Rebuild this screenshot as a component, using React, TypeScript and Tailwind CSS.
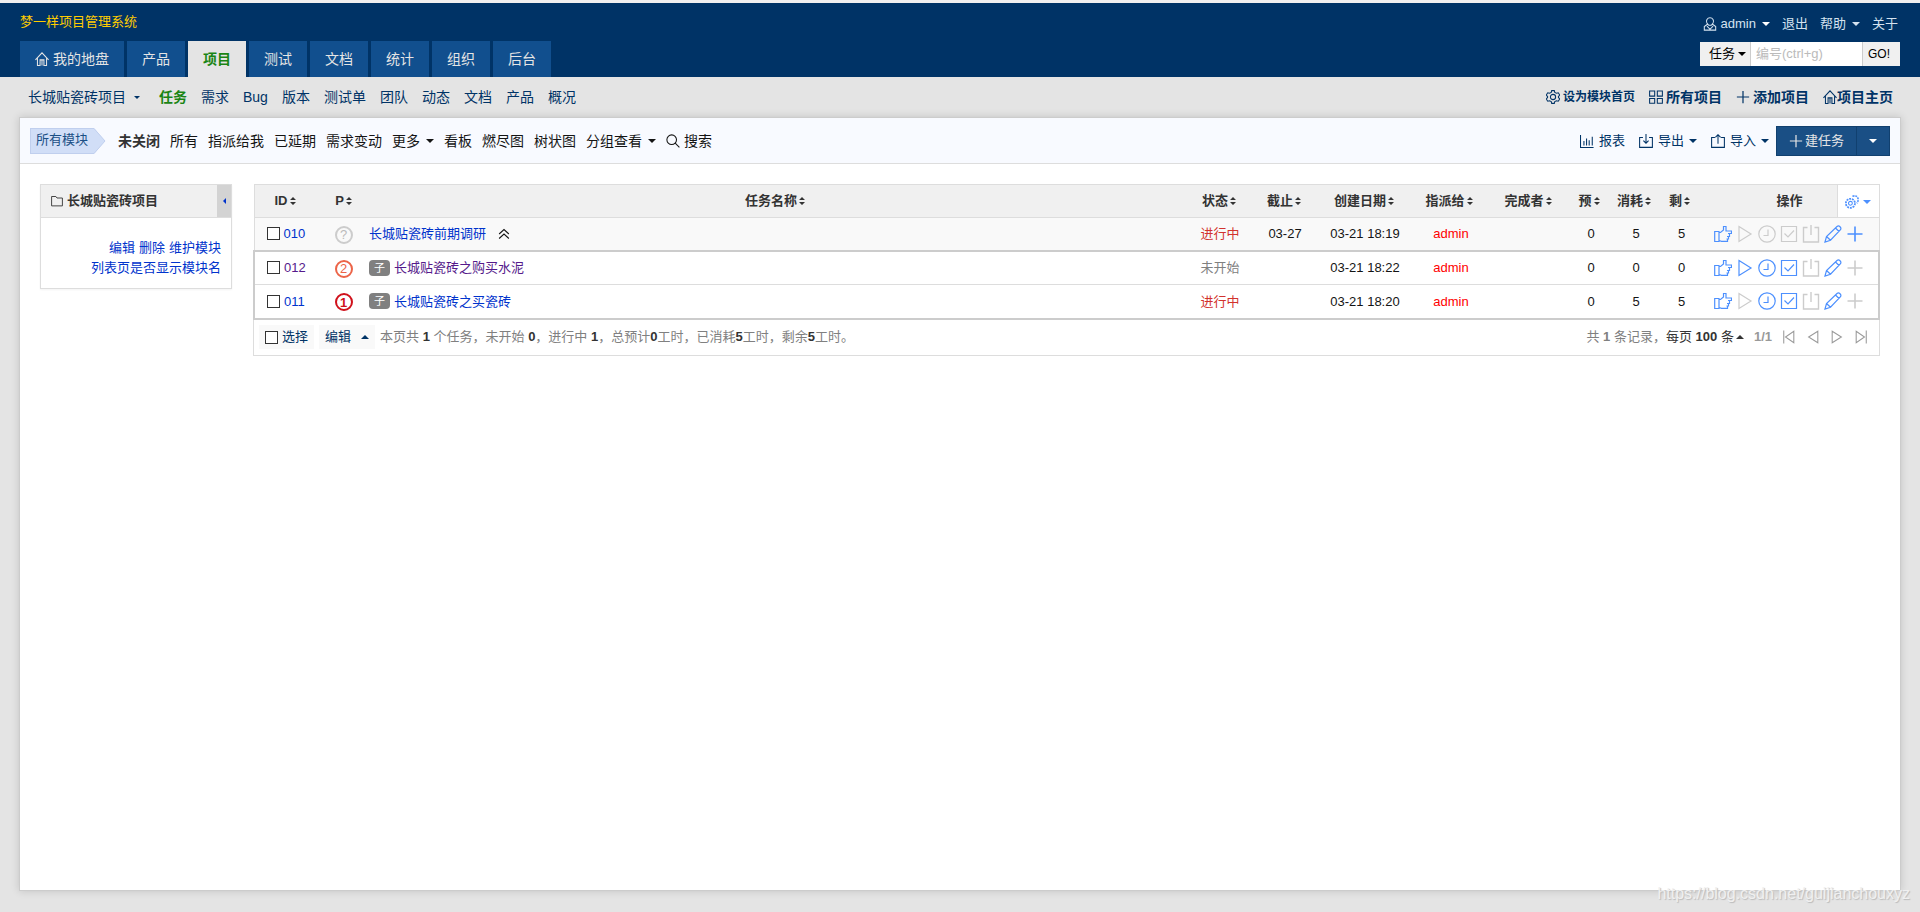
import type { ReactNode } from 'react';
import clsx from 'clsx';

const tabs = ['产品', '项目', '测试', '文档', '统计', '组织', '后台'];
const subMenu = ['任务', '需求', 'Bug', '版本', '测试单', '团队', '动态', '文档', '产品', '概况'];

type Filter = { label: string; active?: boolean; caret?: boolean };

const filters: Filter[] = [
  { label: '未关闭', active: true },
  { label: '所有' },
  { label: '指派给我' },
  { label: '已延期' },
  { label: '需求变动' },
  { label: '更多', caret: true },
  { label: '看板' },
  { label: '燃尽图' },
  { label: '树状图' },
  { label: '分组查看', caret: true },
];

type Task = {
  id: string;
  pri: string;
  name: string;
  status: string;
  deadline: string;
  created: string;
  estimate: number;
  consumed: number;
  left: number;
  visited?: boolean;
  enabled: string[];
};

const parentTask: Task = {
  id: '010', pri: '?', name: '长城贴瓷砖前期调研', status: '进行中', deadline: '03-27', created: '03-21 18:19',
  estimate: 0, consumed: 5, left: 5, enabled: ['指派', '编辑', '分解'],
};

const childTasks: Task[] = [
  {
    id: '012', pri: '2', name: '长城贴瓷砖之购买水泥', status: '未开始', deadline: '', created: '03-21 18:22',
    estimate: 0, consumed: 0, left: 0, visited: true, enabled: ['指派', '开始', '工时', '完成', '编辑'],
  },
  {
    id: '011', pri: '1', name: '长城贴瓷砖之买瓷砖', status: '进行中', deadline: '', created: '03-21 18:20',
    estimate: 0, consumed: 5, left: 5, enabled: ['指派', '工时', '完成', '编辑'],
  },
];

const actions = [
  { name: '指派', icon: <path d="M.7 6.500h4.300v10H.7zM5 7.500h1.500L9.500 5V1.500h2.500v4.500h5.500v2.500H14M15.500 8.500v3H13M14.500 11.500v2.500H12.500M13.500 14v2.300H7.500L5 15.500" /> },
  { name: '开始', icon: <path d="M3 1.500L15 9 3 16.500z" /> },
  { name: '工时', icon: <path d="M9 .8a8.200 8.200 0 1 0 0 16.400A8.200 8.200 0 1 0 9 .8zM10 4.500v6H5.500" /> },
  { name: '完成', icon: <path d="M1.500 1.500h15v15h-15zM4.500 8.500l3.500 3.500 6-6.500" /> },
  { name: '关闭', icon: <path d="M5.500 2.500h-4v14.500h15V2.500h-4M9 0v10" strokeWidth="1.4" /> },
  { name: '编辑', icon: <path d="M1 17l1.500-5.500L13 1.500q1.500-1.200 3 .200t.500 3L6.500 15.200zM11.500 3l3.500 3.500M2.500 11.500l4 3.700" /> },
  { name: '分解', icon: <path d="M9 1.500v15M1.500 9h15" strokeWidth="1.6" /> },
];

const columns = ['状态', '截止', '创建日期', '指派给', '完成者', '预', '消耗', '剩'];

const Icon = ({ children, className = 'size-3.5', box = '0 0 16 16' }: { children: ReactNode; className?: string; box?: string }) => (
  <svg viewBox={box} className={clsx('inline-block shrink-0', className)} fill="none" stroke="currentColor" strokeWidth="1.2" aria-hidden="true">
    {children}
  </svg>
);

const Caret = ({ up = false, small = false }: { up?: boolean; small?: boolean }) => (
  <svg viewBox="0 0 8 4" className={clsx('inline-block shrink-0', small ? 'h-[3px] w-1.5' : 'h-1 w-2', up && 'rotate-180')} fill="currentColor" aria-hidden="true">
    <path d="M0 0h8L4 4z" />
  </svg>
);

const Home = ({ className }: { className?: string }) => (
  <Icon className={className}>
    <path d="M.5 9L8 1l7.500 8M2.800 7v8.400h3V9h4.400v6.400h3V7M8 9v6.400" />
  </Icon>
);

const Plus = ({ className }: { className?: string }) => (
  <Icon className={className}><path d="M8 1v14M1 8h14" strokeWidth="1.4" /></Icon>
);

const Sort = () => (
  <svg viewBox="0 0 6 8" className="ml-0.5 inline-block h-2 w-1.5 align-[0px]" fill="currentColor" aria-hidden="true">
    <path d="M0 3h6L3 0zM0 5h6L3 8z" />
  </svg>
);

const Checkbox = ({ label }: { label: string }) => (
  <input type="checkbox" aria-label={label} className="size-[13px] shrink-0 appearance-none border border-[#333] bg-white" />
);

const Priority = ({ value }: { value: string }) => (
  <span
    className={clsx(
      'inline-flex size-[18px] items-center justify-center rounded-full border-2 align-middle text-[13px] leading-none',
      value === '?' && 'border-[#ccc] text-[#bbb]',
      value === '2' && 'border-[#ec6448] text-[#ec6448]',
      value === '1' && 'border-[#d0111b] font-bold text-[#d0111b]',
    )}
  >
    {value}
  </span>
);

const TaskRow = ({ task, child = false }: { task: Task; child?: boolean }) => {
  const linkColor = task.visited ? 'text-[#551a8b]' : 'text-[#03c]';
  return (
    <tr className={clsx('border-t border-[#ddd]', child ? 'h-[34px]' : 'h-[33px] bg-[#f9f9f9]')}>
      <td className="pl-3">
        <div className="flex items-center gap-1">
          <Checkbox label={task.id} />
          <a href="#" className={linkColor}>{task.id}</a>
        </div>
      </td>
      <td className="text-center"><Priority value={task.pri} /></td>
      <td className="pl-2">
        <div className="flex items-center">
          {child && (
            <span className="mr-1 inline-flex h-4 w-[21px] items-center justify-center rounded-sm bg-[#808080] text-[11px] text-white">子</span>
          )}
          <a href="#" className={linkColor}>{task.name}</a>
          {!child && (
            <button type="button" aria-label="收起" className="ml-3 flex">
              <Icon className="size-3"><path d="M1.500 8L8 2l6.500 6M1.500 14L8 8l6.500 6" strokeWidth="1.4" /></Icon>
            </button>
          )}
        </div>
      </td>
      <td className={clsx('pl-0.5 text-center', task.status === '未开始' ? 'text-[#808080]' : 'text-[#d2322d]')}>{task.status}</td>
      <td className="pl-0.5 text-center">{task.deadline}</td>
      <td className="pl-0.5 text-center">{task.created}</td>
      <td className="pl-1 text-center text-[#f00]">admin</td>
      <td></td>
      <td className="pl-1 text-center">{task.estimate}</td>
      <td className="pl-1 text-center">{task.consumed}</td>
      <td className="pl-1 text-center">{task.left}</td>
      <td colSpan={2} className="pl-3">
        <div className="flex gap-1">
          {actions.map((action) => {
            const on = task.enabled.includes(action.name);
            return (
              <button
                key={action.name}
                type="button"
                aria-label={action.name}
                disabled={!on}
                className={clsx('flex', on ? 'text-[#4d90fe]' : 'text-[#ccc]')}
              >
                <Icon box="0 0 18 18" className="size-[18px]">{action.icon}</Icon>
              </button>
            );
          })}
        </div>
      </td>
    </tr>
  );
};

const Header = () => (
  <header className="flex h-[77px] justify-between border-t-[3px] border-[#f0f0f0] bg-[#036] px-5">
    <div className="flex flex-col justify-between">
      <h1 className="pt-[9px] text-[13px] leading-5 text-[#fc0]">梦一样项目管理系统</h1>
      <nav className="flex gap-[3px] text-sm">
        <a href="#" className="flex h-9 items-center gap-1 bg-[#114f8e] px-[15px] text-[#e5e5e5]">
          <Home />
          我的地盘
        </a>
        {tabs.map((tab) => (
          <a
            key={tab}
            href="#"
            className={clsx(
              'flex h-9 items-center px-[15px]',
              tab === '项目' ? 'bg-[#e4e4e4] font-bold text-[#1a8514]' : 'bg-[#114f8e] text-[#e5e5e5]',
            )}
          >
            {tab}
          </a>
        ))}
      </nav>
    </div>

    <div className="flex flex-col items-end gap-2 pt-[11px]">
      <div className="flex items-center gap-3 pr-0.5 text-[13px] leading-5 text-[#d5e3f0]">
        <a href="#" className="flex items-center">
          <Icon className="mr-1 size-3.5">
            <path d="M8 .8a4 4 0 0 0-3.500 6L6.500 9.500h3l2-2.700A4 4 0 0 0 8 .8zM5.500 8L1.500 11v4h13v-4L10.500 8M4.500 10.500L8 14l3.500-3.500" />
          </Icon>
          admin
          <span className="ml-1.5 flex text-white"><Caret /></span>
        </a>
        <a href="#">退出</a>
        <a href="#" className="flex items-center gap-1.5">帮助<Caret /></a>
        <a href="#">关于</a>
      </div>
      <form className="flex h-6 w-[200px] text-[13px] text-black">
        <button type="button" className="flex w-[51px] items-center justify-end gap-[3px] border-r border-[#ccc] bg-[#f0f0f0] pr-1">
          任务<Caret />
        </button>
        <input type="text" aria-label="编号" placeholder="编号(ctrl+g)" className="min-w-0 flex-1 bg-white px-[5px] placeholder:text-[#bbb]" />
        <button type="button" className="w-[38px] border-l border-[#ccc] bg-[#f0f0f0] pl-[5px] text-left text-xs">GO!</button>
      </form>
    </div>
  </header>
);

const SubNav = () => (
  <div className="flex h-10 items-center justify-between pr-[27px] pl-7 text-sm text-[#036]">
    <nav className="flex items-center gap-3.5">
      <a href="#" className="mr-[5px] flex items-center gap-2">长城贴瓷砖项目<Caret small /></a>
      {subMenu.map((item) => (
        <a key={item} href="#" className={clsx(item === '任务' && 'font-bold text-[#1a8514]')}>{item}</a>
      ))}
    </nav>
    <div className="flex items-center gap-3.5 font-bold">
      <a href="#" className="flex items-center gap-[3px] text-xs">
        <Icon>
          <path d="M6.500.700h3l.500 2 2 1 2-.500 1.700 2.600-1.500 1.700v1l1.500 1.700L14 12.800l-2-.500-2 1-.500 2h-3L6 13.300l-2-1-2 .500L.300 10.200l1.500-1.700v-1L.300 5.800 2 3.200l2 .500 2-1z" />
          <circle cx="8" cy="8" r="3" />
        </Icon>
        设为模块首页
      </a>
      <a href="#" className="flex items-center gap-[3px]">
        <Icon><path d="M.7 1.200h5.800v5.800H.7zM9.500 1.200h5.800v5.800H9.500zM.7 9.700h5.800v5.500H.7zM9.500 9.700h5.800v5.500H9.500z" /></Icon>
        所有项目
      </a>
      <a href="#" className="flex items-center gap-[3px]"><Plus />添加项目</a>
      <a href="#" className="flex items-center"><Home />项目主页</a>
    </div>
  </div>
);

const Toolbar = () => (
  <div className="flex h-[46px] items-center justify-between border-b border-[#ddd] bg-[#f8faff] pr-2.5 pl-2.5">
    <div className="flex items-center text-sm text-[#141414]">
      <a href="#" className="mr-3 flex items-center text-[13px] text-[#1a4f85]">
        <span className="flex h-[26px] items-center border border-r-0 border-[#c0cfee] bg-[#d1def7] pr-1.5 pl-[5px]">所有模块</span>
        <svg viewBox="0 0 12 26" className="h-[26px] w-3" aria-hidden="true">
          <path d="M0 0L11 13 0 26z" fill="#d1def7" />
          <path d="M0 .5L11 13 0 25.500" fill="none" stroke="#c0cfee" />
        </svg>
      </a>
      <div className="flex items-center gap-2.5">
        {filters.map((filter) => (
          <a key={filter.label} href="#" className={clsx('flex items-center gap-1.5', filter.active && 'font-bold text-[#333]')}>
            {filter.label}
            {filter.caret && <Caret />}
          </a>
        ))}
        <a href="#" className="flex items-center gap-1">
          <Icon><circle cx="6.500" cy="6.500" r="5.500" /><path d="M10.500 10.500l4.800 4.800" /></Icon>
          搜索
        </a>
      </div>
    </div>

    <div className="flex items-center text-[13px] text-[#036]">
      <a href="#" className="mr-3.5 flex items-center gap-[5px]">
        <Icon><path d="M.6 1v14.400H15.500M4.500 13V8M7.500 13V5M10.500 13V7M14 13V3" /></Icon>
        报表
      </a>
      <button type="button" className="mr-3.5 flex items-center gap-[5px]">
        <Icon><path d="M4.500 4H.7v11.300h14.600V4H11.500M8 0v10.500M5 7.500l3 3 3-3" /></Icon>
        导出
        <Caret />
      </button>
      <button type="button" className="mr-[7px] flex items-center gap-[5px]">
        <Icon><path d="M4.500 4H.7v11.300h14.600V4H11.500M8 11V.8M5 3.800l3-3 3 3" /></Icon>
        导入
        <Caret />
      </button>
      <div className="flex h-[30px] border border-[#11406f] bg-[#1a4f85] text-white">
        <button type="button" className="flex items-center gap-0.5 px-3 text-[#e5e5e5]"><Plus />建任务</button>
        <button type="button" aria-label="更多操作" className="flex w-[33px] items-center justify-center border-l border-[#11406f]"><Caret /></button>
      </div>
    </div>
  </div>
);

const Sidebar = () => (
  <aside className="w-48 shrink-0 border border-[#ddd] bg-white shadow-xs">
    <div className="flex h-[33px] border-b border-[#ddd] bg-[#f0f0f0]">
      <h2 className="flex flex-1 items-center gap-1 pl-2.5 font-bold text-[#333]">
        <Icon className="size-3"><path d="M.8 2h5.700l1.500 2h7.200v10.500H.8z" /></Icon>
        长城贴瓷砖项目
      </h2>
      <button type="button" aria-label="收起侧栏" className="flex w-3.5 items-center justify-center bg-[#d3d3d3] text-[#03c]">
        <svg viewBox="0 0 3 6" className="h-1.5 w-[3px]" fill="currentColor" aria-hidden="true"><path d="M3 0v6L0 3z" /></svg>
      </button>
    </div>
    <div className="flex flex-col items-end px-2.5 pt-5 pb-2.5 leading-5 text-[#03c]">
      <div className="flex gap-1">
        <a href="#">编辑</a>
        <a href="#">删除</a>
        <a href="#">维护模块</a>
      </div>
      <a href="#">列表页是否显示模块名</a>
    </div>
  </aside>
);

const Pager = ({ label, path }: { label: string; path: string }) => (
  <button type="button" aria-label={label} className="flex text-[#999]">
    <Icon><path d={path} /></Icon>
  </button>
);

const TaskTable = () => (
  <div className="min-w-0 flex-1">
    <table className="w-full table-fixed border-collapse border border-[#ddd]">
      <colgroup>
        <col className="w-[72px]" />
        <col className="w-[35px]" />
        <col />
        <col className="w-[60px]" />
        <col className="w-[70px]" />
        <col className="w-[90px]" />
        <col className="w-[80px]" />
        <col className="w-[78px]" />
        <col className="w-[44px]" />
        <col className="w-[46px]" />
        <col className="w-[45px]" />
        <col className="w-[135px]" />
        <col className="w-[42px]" />
      </colgroup>
      <thead className="bg-[#f0f0f0] text-[#333]">
        <tr className="h-[33px]">
          <th className="pl-5 text-left">ID<Sort /></th>
          <th>P<Sort /></th>
          <th>任务名称<Sort /></th>
          {columns.map((column) => (
            <th key={column} className="whitespace-nowrap">{column}<Sort /></th>
          ))}
          <th className="pr-[34px] text-right">操作</th>
          <th className="border-l border-[#ddd] bg-white">
            <button type="button" aria-label="自定义列" className="inline-flex items-center gap-1 align-middle text-[#4d90fe]">
              <Icon className="size-3.5">
                <circle cx="6.200" cy="9.500" r="5.200" strokeWidth="2" strokeDasharray="2.200 1" />
                <circle cx="6.200" cy="9.500" r="2.200" />
                <path d="M8.500 1.500q4.500-1.500 6 1.500t-1 6.500" strokeWidth="1.800" strokeDasharray="2.200 1" />
              </Icon>
              <Caret />
            </button>
          </th>
        </tr>
      </thead>
      <tbody>
        <TaskRow task={parentTask} />
      </tbody>
      <tbody className="border-2 border-[#ccc]">
        {childTasks.map((task) => <TaskRow key={task.id} task={task} child />)}
      </tbody>
    </table>

    <div className="flex h-9 items-center justify-between border border-t-0 border-[#ddd] pr-[11px] pl-[5px] text-[#808080]">
      <div className="flex items-center gap-[5px]">
        <label className="flex h-6 items-center gap-1 bg-[#f9f9f9] px-1.5 text-[#036]">
          <Checkbox label="选择" />
          选择
        </label>
        <button type="button" className="flex h-6 items-center gap-2.5 bg-[#f9f9f9] px-1.5 text-[#036]">
          编辑<Caret up />
        </button>
        <p>
          本页共 <b className="text-[#333]">1</b> 个任务，未开始 <b className="text-[#333]">0</b>，进行中 <b className="text-[#333]">1</b>，总预计<b className="text-[#333]">0</b>工时，已消耗<b className="text-[#333]">5</b>工时，剩余<b className="text-[#333]">5</b>工时。
        </p>
      </div>
      <div className="flex items-center gap-2.5">
        <div className="flex items-center">
          <span>共 <b>1</b> 条记录，</span>
          <button type="button" className="flex items-center gap-0.5 text-[#333]">
            <span>每页 <b>100</b> 条</span>
            <Caret up />
          </button>
        </div>
        <b className="font-bold text-[#999]">1/1</b>
        <Pager label="首页" path="M2 .5v15M13.500 1.500v13L4 8z" />
        <Pager label="上一页" path="M13.500 1.500v13L3 8z" />
        <Pager label="下一页" path="M2.500 1.500v13L13 8z" />
        <Pager label="末页" path="M14 .5v15M2.500 1.500v13L12 8z" />
      </div>
    </div>
  </div>
);

const App = () => (
  <div className="relative flex min-h-screen flex-col bg-[#e4e4e4] font-['Liberation_Sans','Noto_Sans_CJK_SC',sans-serif] text-[13px] text-[#141414]">
    <Header />
    <SubNav />
    <main className="mx-[19px] mb-[21px] flex-1 border border-[#ccc] bg-white shadow-[0_0_8px_rgba(0,0,0,0.15)]">
      <Toolbar />
      <div className="flex items-start gap-[21px] p-5">
        <Sidebar />
        <TaskTable />
      </div>
    </main>
    <span className="absolute right-2.5 bottom-1.5 text-base text-[#f0f0f0] [text-shadow:1px_1px_1px_#bbb]">
      https://blog.csdn.net/guijianchouxyz
    </span>
  </div>
);

export default App;
